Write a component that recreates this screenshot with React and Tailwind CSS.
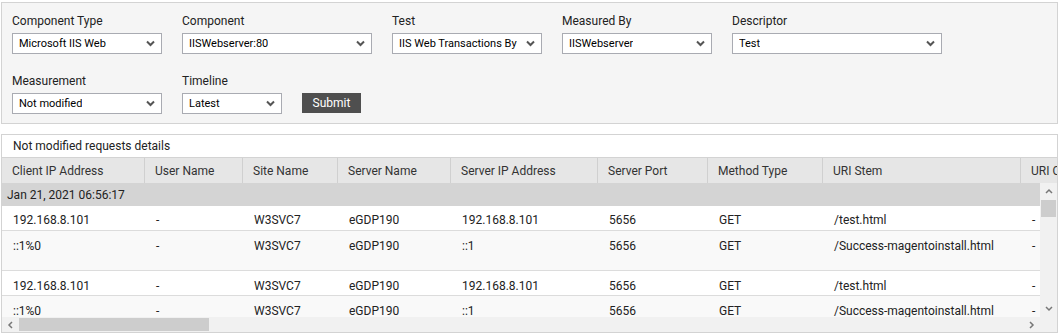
import React from "react";

const columns = [
  { label: "Client IP Address", w: "w-[143px]" },
  { label: "User Name", w: "w-[98px]" },
  { label: "Site Name", w: "w-[95px]" },
  { label: "Server Name", w: "w-[113px]" },
  { label: "Server IP Address", w: "w-[147px]" },
  { label: "Server Port", w: "w-[110px]" },
  { label: "Method Type", w: "w-[115px]" },
  { label: "URI Stem", w: "w-[198px]" },
  { label: "URI Query", w: "w-[150px]" },
];

const rowA = ["192.168.8.101", "-", "W3SVC7", "eGDP190", "192.168.8.101", "5656", "GET", "/test.html", "-"];
const rowB = ["::1%0", "-", "W3SVC7", "eGDP190", "::1", "5656", "GET", "/Success-magentoinstall.html", "-"];

const rows = [
  { cells: rowA, cls: "h-[25px] pt-[6px] bg-white" },
  { cells: rowB, cls: "h-[40px] pt-[7px] bg-[#f9f9f9]" },
  { cells: rowA, cls: "h-[25px] pt-[7px] bg-white" },
  { cells: rowB, cls: "h-[25px] pt-[7px] bg-[#f9f9f9]" },
];

function Chevron({ className = "" }) {
  return (
    <svg width="9" height="7" viewBox="0 0 9 7" className={className}>
      <path d="M1 1.5 L4.5 5 L8 1.5" fill="none" stroke="#555" strokeWidth="2" />
    </svg>
  );
}

function Field({ label, value, w }) {
  return (
    <div className={w}>
      <div className="h-[16px] leading-[16px] text-[12px] text-[#222]">{label}</div>
      <div className="mt-[4px] flex h-[21px] items-center justify-between border border-[#a9abb2] bg-white pl-[6px] pr-[6px]">
        <span className="min-w-0 overflow-hidden whitespace-nowrap pt-[1px] text-[11px] text-black">{value}</span>
        <Chevron className="ml-[4px] shrink-0" />
      </div>
    </div>
  );
}

function SmallArrow({ dir }) {
  const d = {
    up: "M1 5 L4 2 L7 5",
    down: "M1 2 L4 5 L7 2",
    left: "M5 1 L2 4 L5 7",
    right: "M2 1 L5 4 L2 7",
  }[dir];
  return (
    <svg width="8" height="8" viewBox="0 0 8 8">
      <path d={d} fill="none" stroke="#777" strokeWidth="1.5" />
    </svg>
  );
}

export default function App() {
  return (
    <div className="h-[335px] w-[1059px] overflow-hidden bg-white pt-[2px] font-['Roboto','Liberation_Sans',sans-serif]">
      {/* filters */}
      <div className="ml-[1px] w-[1057px] border border-[#d3d3d3] bg-[#f5f5f5] pb-[9px] pl-[10px] pt-[10px]">
        <div className="flex gap-[20px]">
          <Field label="Component Type" value="Microsoft IIS Web" w="w-[150px]" />
          <Field label="Component" value="IISWebserver:80" w="w-[190px]" />
          <Field label="Test" value="IIS Web Transactions By" w="w-[150px]" />
          <Field label="Measured By" value="IISWebserver" w="w-[150px]" />
          <Field label="Descriptor" value="Test" w="w-[210px]" />
        </div>
        <div className="mt-[19px] flex items-end gap-[20px]">
          <Field label="Measurement" value="Not modified" w="w-[150px]" />
          <Field label="Timeline" value="Latest" w="w-[100px]" />
          <button className="mb-[1px] flex h-[20px] w-[59px] items-center justify-center bg-[#4f4f4f] text-[12px] text-white">
            Submit
          </button>
        </div>
      </div>

      {/* table panel */}
      <div className="ml-[1px] mt-[10px] w-[1057px] border border-[#d3d3d3] bg-white">
        <div className="flex h-[23px] items-center border-b border-[#d3d3d3] pl-[11px] text-[12px] text-[#222]">
          Not modified requests details
        </div>
        <div className="overflow-hidden">
          <div className="flex h-[25px] w-max items-center bg-[#e6e6e6]">
            {columns.map((c, i) => (
              <div
                key={c.label}
                className={`${c.w} flex h-full shrink-0 items-center pl-[10px] text-[12px] text-[#333] ${
                  i < columns.length - 1 ? "border-r border-[#d0d0d0]" : ""
                }`}
              >
                {c.label}
              </div>
            ))}
          </div>
        </div>
        <div className="flex h-[134px]">
          <div className="flex-1 overflow-hidden">
            <div className="flex h-[23px] items-center bg-[#d4d4d4] pl-[5px] text-[12px] text-[#222]">
              Jan 21, 2021 06:56:17
            </div>
            {rows.map((r, ri) => (
              <div key={ri} className={`flex w-max items-start border-b border-[#dcdcdc] ${r.cls}`}>
                {r.cells.map((v, i) => (
                  <div
                    key={i}
                    className={`${columns[i].w} shrink-0 pl-[11px] leading-[16px] text-[12px] text-[#222]`}
                  >
                    {v}
                  </div>
                ))}
              </div>
            ))}
          </div>
          <div className="flex w-[17px] shrink-0 flex-col items-center bg-[#f1f1f1]">
            <div className="flex h-[17px] items-center">
              <SmallArrow dir="up" />
            </div>
            <div className="h-[17px] w-[15px] bg-[#cdcdcd]" />
            <div className="flex-1" />
            <div className="flex h-[17px] items-center">
              <SmallArrow dir="down" />
            </div>
          </div>
        </div>
        <div className="flex h-[15px] bg-[#f1f1f1]">
          <div className="flex w-[17px] items-center justify-center">
            <SmallArrow dir="left" />
          </div>
          <div className="my-[1px] w-[190px] bg-[#cdcdcd]" />
          <div className="flex-1" />
          <div className="flex w-[17px] items-center justify-center">
            <SmallArrow dir="right" />
          </div>
          <div className="w-[17px]" />
        </div>
      </div>
    </div>
  );
}
